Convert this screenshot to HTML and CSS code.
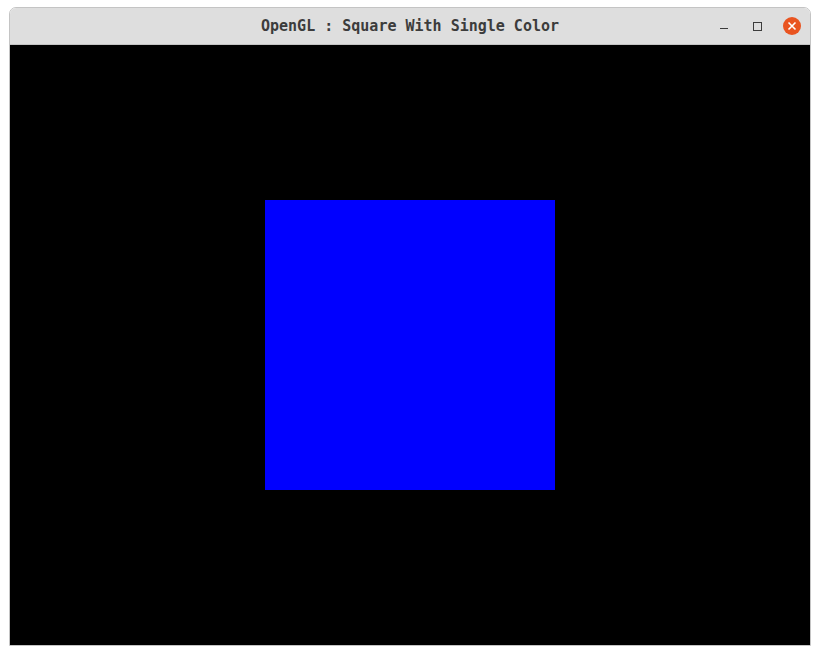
FILE: index.html
```html
<!DOCTYPE html>
<html>
<head>
<meta charset="utf-8">
<link rel="stylesheet" href="styles.css">
</head>
<body>
<div class="window">
  <div class="titlebar">
    <div class="title">OpenGL : Square With Single Color</div>
    <div class="controls">
      <span class="btn">
        <svg width="16" height="16" viewBox="0 0 16 16"><line x1="5" y1="10.5" x2="13" y2="10.5" stroke="#3c3c3c" stroke-width="1"/></svg>
      </span>
      <span class="btn">
        <svg width="16" height="16" viewBox="0 0 16 16"><rect x="4.5" y="4.5" width="8" height="8" fill="none" stroke="#3c3c3c" stroke-width="1"/></svg>
      </span>
      <span class="btn close">
        <svg width="18" height="18" viewBox="0 0 18 18"><circle cx="9" cy="9" r="9" fill="#e95420"/><path d="M5.5 5.5 L12.5 12.5 M12.5 5.5 L5.5 12.5" stroke="#fff" stroke-width="1.6"/></svg>
      </span>
    </div>
  </div>
  <div class="canvas">
    <div class="square"></div>
  </div>
</div>
</body>
</html>
```
FILE: styles.css
```css
html, body {
  margin: 0;
  padding: 0;
  background: #ffffff;
}
body {
  padding: 7px 0 0 9px;
}
.window {
  width: 800px;
  border: 1px solid #c4c4c4;
  border-radius: 7px 7px 0 0;
  overflow: hidden;
  display: flex;
  flex-direction: column;
}
.titlebar {
  height: 36px;
  background: #dedede;
  border-bottom: 1px solid #c4c4c4;
  display: flex;
  align-items: center;
  justify-content: center;
  position: relative;
}
.title {
  font-family: "DejaVu Sans Mono", monospace;
  font-weight: bold;
  font-size: 15px;
  color: #3c3c3c;
  margin-top: 0;
}
.controls {
  position: absolute;
  right: 9px;
  top: 0;
  height: 36px;
  display: flex;
  align-items: center;
  gap: 18px;
}
.btn {
  display: flex;
  align-items: center;
  justify-content: center;
}
.canvas {
  height: 600px;
  background: #000000;
  display: flex;
  align-items: center;
  justify-content: center;
}
.square {
  width: 290px;
  height: 290px;
  background: #0000ff;
}
```
